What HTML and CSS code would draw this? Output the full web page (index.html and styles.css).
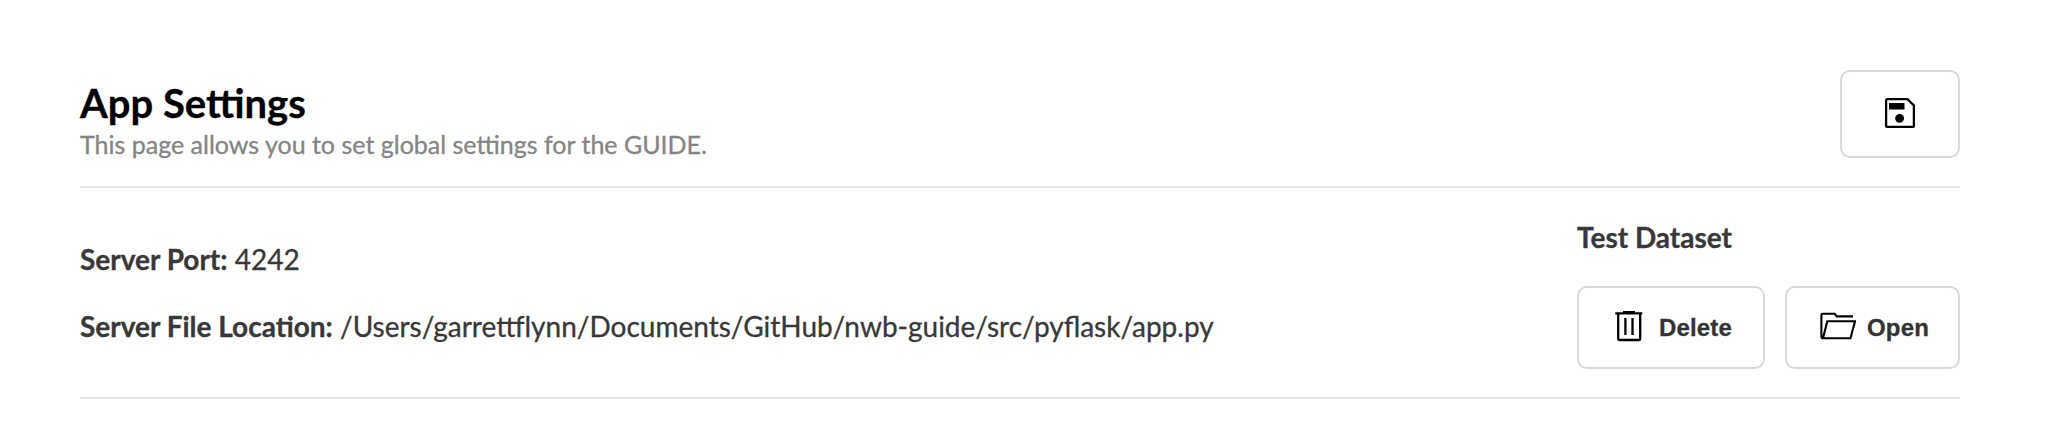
FILE: index.html
```html
<!DOCTYPE html>
<html lang="en">
<head>
<meta charset="utf-8">
<title>App Settings</title>
<link rel="stylesheet" href="styles.css">
</head>
<body>
<main class="page">
<header class="header">
<div class="heading">
<h1 class="title">App Settings</h1>
<p class="subtitle">This page allows you to set global settings for the GUIDE.</p>
</div>
<button class="button save" aria-label="Save">
<svg class="icon" viewBox="0 0 36 36"><path d="M5 4.1H25.5L31.9 10.5V30.5Q31.9 31.9 30.5 31.9H5.5Q4.1 31.9 4.1 30.5V5.5Q4.1 4.1 5.5 4.1Z" fill="none" stroke="#000" stroke-width="2.3"/><path d="M7 8H22.5V14.5H7Z"/><circle cx="17.6" cy="23.3" r="4.4"/></svg>
</button>
</header>
<section class="content">
<div class="server">
<p class="row"><b>Server Port:</b> 4242</p>
<p class="row"><b>Server File Location:</b> /Users/garrettflynn/Documents/GitHub/nwb-guide/src/pyflask/app.py</p>
</div>
<div class="dataset">
<h2 class="dataset-title">Test Dataset</h2>
<div class="actions">
<button class="button delete"><svg class="icon" viewBox="0 0 36 36" fill="none" stroke="#000" stroke-width="2.3"><path d="M3.3 5.3H30.3M11 4.2H23M6.2 5V31Q6.2 32 7.2 32H27.2Q28.2 32 28.2 31V5M13.4 10V27M20.5 10V27"/></svg>Delete</button>
<button class="button open"><svg class="icon" viewBox="0 0 36 36" fill="none" stroke="#000" stroke-width="2.1"><path d="M33 8.4H16.7L14.6 5.7H2.7Q1.4 5.7 1.4 7V29Q1.4 30.2 2.7 30.2M7.3 13.3H35L30.5 30.2H3Z"/></svg>Open</button>
</div>
</div>
</section>
</main>
</body>
</html>
```
FILE: styles.css
```css
* { box-sizing: border-box; }
body { margin: 0; background: #fff; font-family: Lato, sans-serif; color: #383838; -webkit-text-stroke: 0.3px currentColor; }
.page { padding: 70px 100px 0 80px; }
.header { display: flex; justify-content: space-between; height: 118px; border-bottom: 2px solid #e5e5e5; }
.heading { padding-top: 8px; }
.title { margin: 0; font-size: 40px; line-height: 50px; font-weight: 700; color: #000; }
.subtitle { margin: 0; font-size: 25px; line-height: 32px; color: #848484; }
.button { display: flex; align-items: center; gap: 11px; background: #fff; border: 2px solid #d9d9d9; border-radius: 10px; font: 700 24px "Liberation Sans", Arial, sans-serif; letter-spacing: 0.15px; color: #333; padding: 0 0 0 33px; }
.save { width: 120px; height: 88px; justify-content: center; padding: 0; }
.content { display: flex; justify-content: space-between; height: 211px; border-bottom: 2px solid #e5e5e5; }
.server { padding-top: 53px; }
.row { margin: 0 0 31px; font-size: 28px; line-height: 36px; }
.dataset-title { margin: 32px 0; font-size: 28px; line-height: 34px; }
.actions { display: flex; gap: 20px; }
.delete { width: 188px; height: 83px; }
.open { width: 175px; height: 83px; }
.icon { flex: none; width: 36px; height: 36px; margin-bottom: 3px; }
```
